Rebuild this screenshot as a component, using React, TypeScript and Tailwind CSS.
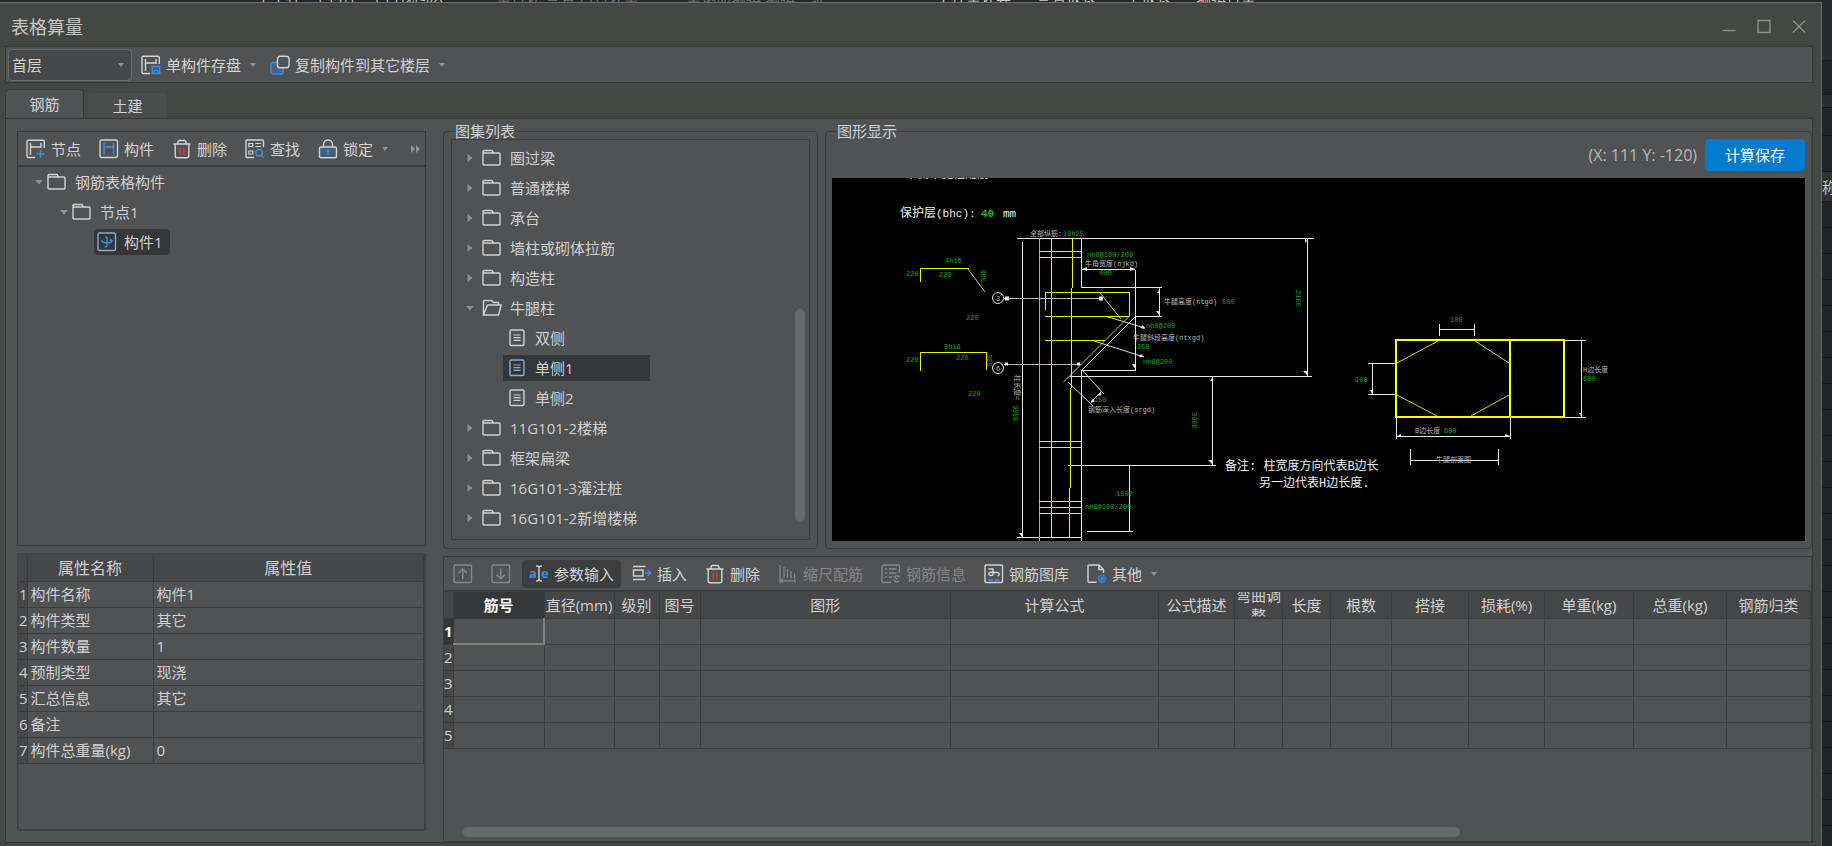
import type { ReactNode } from 'react';
import clsx from 'clsx';

const BLUE = '#3a8ee0';
const RED = '#c93a42';

// ---------- Icons ----------

function Svg({ children }: { children: ReactNode }) {
    return (
        <svg
            width="20"
            height="20"
            viewBox="0 0 20 20"
            fill="none"
            stroke="currentColor"
            strokeWidth="1.4"
            className="shrink-0"
            aria-hidden="true"
        >
            {children}
        </svg>
    );
}

const NodeIcon = () => (
    <Svg>
        <path d="M18.3 9V2.5a1.2 1.2 0 0 0-1.2-1.2H2.2A1.2 1.2 0 0 0 1 2.5v14.8a1.2 1.2 0 0 0 1.2 1.2H9" />
        <path d="M4.5 4v12M15 4v5M4.5 8H15" />
        <path d="M14.5 11v8M10.5 15h8" stroke={BLUE} />
    </Svg>
);

const SaveComponentIcon = () => (
    <Svg>
        <path d="M18.3 9V2.5a1.2 1.2 0 0 0-1.2-1.2H2.2A1.2 1.2 0 0 0 1 2.5v14.8a1.2 1.2 0 0 0 1.2 1.2H9" />
        <path d="M4.5 4v12M15 4v5M4.5 8H15" />
        <path d="M11.2 11.5h7.6v7h-7.6z" stroke={BLUE} fill="#2f5f93" />
        <path d="M13 18.5v-3h4v3" stroke={BLUE} strokeWidth="1" />
    </Svg>
);

const CopyIcon = () => (
    <Svg>
        <rect x="1" y="7.5" width="12" height="11.5" rx="1.5" stroke={BLUE} fill="#46638a" />
        <rect x="7.5" y="1.2" width="11.5" height="11.5" rx="2.5" fill="#515254" />
    </Svg>
);

const ComponentIcon = () => (
    <Svg>
        <rect x="1" y="1" width="17.5" height="17.5" rx="1.5" />
        <path d="M5 4v11.5M14.5 4v11.5M5 8h9.5" stroke={BLUE} />
    </Svg>
);

const TrashIcon = () => (
    <Svg>
        <path d="M1.5 5h17M6 4.5V3a1.5 1.5 0 0 1 1.5-1.5h5A1.5 1.5 0 0 1 14 3v1.5M3.2 5v12a1.8 1.8 0 0 0 1.8 1.8h10a1.8 1.8 0 0 0 1.8-1.8V5" />
        <path d="M8.2 8.5v7M11.8 8.5v7" stroke={RED} strokeWidth="1.6" />
    </Svg>
);

const FindIcon = () => (
    <Svg>
        <path d="M18.5 8V2.2A1.2 1.2 0 0 0 17.3 1H2.2A1.2 1.2 0 0 0 1 2.2v15.1a1.2 1.2 0 0 0 1.2 1.2H9" />
        <path d="M3.8 4.5h4v3h-4zM3.8 12h4v3h-4zM10.5 4.5H16M10.5 7.5H16" strokeWidth="1.2" />
        <circle cx="14" cy="13.8" r="3.3" stroke={BLUE} />
        <path d="m16.3 16.2 2.5 2.5" stroke={BLUE} />
    </Svg>
);

const LockIcon = () => (
    <Svg>
        <path d="M5.5 8V5.5a4.5 4.5 0 0 1 9 0V8" />
        <rect x="1.5" y="8" width="17" height="10.8" rx="1.5" fill="#45607f" />
        <path d="M10 16v-4.5" stroke={BLUE} strokeWidth="1.6" />
        <circle cx="10" cy="11.8" r="1.5" fill={BLUE} stroke="none" />
    </Svg>
);

const FolderIcon = () => (
    <Svg>
        <path d="M1 16V3.5a1 1 0 0 1 1-1h8L11.500 5h5.500a1 1 0 0 1 1 1v10a1 1 0 0 1-1 1H2a1 1 0 0 1-1-1zM1 5H12" />
    </Svg>
);

const FolderOpenIcon = () => (
    <Svg>
        <path d="M1.500 17V3.5a1 1 0 0 1 1-1h7l2 2h5V7M1.500 17 5.5 7h13.700l-2.700 10z" />
    </Svg>
);

const SheetIcon = () => (
    <Svg>
        <rect x="3" y="2" width="14" height="15.5" rx="1.5" />
        <path d="M6.5 7h7M6.5 9.7h7M6.5 12.4h7" strokeWidth="1.2" />
    </Svg>
);

const PieceIcon = () => (
    <Svg>
        <rect x="1" y="1" width="17.5" height="17.5" rx="1.5" stroke="#86aecf" />
        <path d="M10 5v8.2a1.600 1.600 0 0 1-2.400 1.400M8 5.200h2.500M5 8.200c0 2 1.200 2.500 3 2.500h4.500c1.800 0 2.500-.8 2.500-2.700M12.500 8.300l2.500-.5" stroke={BLUE} />
    </Svg>
);

const ArrowBoxIcon = ({ down }: { down?: boolean }) => (
    <Svg>
        <rect x="1" y="1" width="17.5" height="17.5" rx="1.2" />
        {down ? <path d="M9.8 4.500v10M5.500 10.500l4.300 4.300 4.300-4.300" /> : <path d="M9.8 15V5M5.500 9.300 9.800 5l4.300 4.300" />}
    </Svg>
);

const InputIcon = () => (
    <Svg>
        <path d="M10 3.5v12M7 2c1.5 0 3 .5 3 1.500C10 2.500 11.500 2 13 2M7 17c1.500 0 3-.5 3-1.500 0 1 1.500 1.500 3 1.500" />
        <text x="0" y="14" fontSize="13" fontWeight="700" fill={BLUE} stroke="none" fontFamily="Open Sans, sans-serif">a</text>
        <text x="12" y="14" fontSize="13" fontWeight="700" fill={BLUE} stroke="none" fontFamily="Open Sans, sans-serif">e</text>
    </Svg>
);

const InsertIcon = () => (
    <Svg>
        <path d="M1 2.500h12.500M1 15.500h12.500M1.500 6h9.500v6H1.500z" />
        <path d="M13 9h5.500M15.500 5.800 18.800 9l-3.300 3.200" stroke={BLUE} />
    </Svg>
);

const ScaleIcon = () => (
    <Svg>
        <path d="M2 1v18M6 3v11M9.500 5v9M13 7v7M16.500 9.500V14M2 16.800h15M4.500 15l-2 1.800 2 1.800M17 14.500v4.500" strokeWidth="1.2" />
    </Svg>
);

const InfoIcon = () => (
    <Svg>
        <path d="M18.500 9V2.200A1.200 1.200 0 0 0 17.300 1H2.200A1.200 1.200 0 0 0 1 2.200v15.100a1.200 1.200 0 0 0 1.200 1.200H10M4 5h2M8 5h7.500M4 9h2M8 9h7.500M4 13h2M8 13h3" />
        <path d="M13 15.500a3 3 0 0 0 5.500 1M18.500 13.500a3 3 0 0 0-5-.5l3 2.500" />
    </Svg>
);

const GalleryIcon = () => (
    <Svg>
        <rect x="1" y="1" width="17.5" height="17.5" rx="1.2" />
        <path d="M4.500 5H9v6.500M9 8.500c-2.200-.5-4.300 0-4.300 1.500S7.500 12 9 11M9 8.500h4.500a1.700 1.700 0 0 1 0 3.400" strokeWidth="1.4" />
        <path d="M4 16h5M10.500 16h5" stroke={BLUE} strokeWidth="1.6" />
    </Svg>
);

const OtherIcon = () => (
    <Svg>
        <path d="M9.500 18.300H2a1 1 0 0 1-1-1V2a1 1 0 0 1 1-1h10l4.500 4.500V9M12 1v4.500h4.500" />
        <circle cx="15" cy="15" r="3.600" fill="#2f6cab" stroke={BLUE} strokeDasharray="1.5 1" />
        <circle cx="15" cy="15" r="1.200" stroke={BLUE} strokeWidth="1" />
    </Svg>
);

const Caret = ({ right }: { right?: boolean }) => (
    <svg width="8" height="8" viewBox="0 0 8 8" className="shrink-0 text-[#8d8e90]" fill="currentColor" aria-hidden="true">
        {right ? <path d="M1.500 0l5 4-5 4z" /> : <path d="M0 2h8L4 6.500z" />}
    </svg>
);

const SmallCaret = () => (
    <svg width="6" height="4" viewBox="0 0 6 4" className="shrink-0 text-[#929395]" fill="currentColor" aria-hidden="true">
        <path d="M0 0h6L3 4z" />
    </svg>
);

// ---------- Shared pieces ----------

type ToolButtonProps = {
    icon: ReactNode;
    label?: string;
    title?: string;
    active?: boolean;
    disabled?: boolean;
    menu?: boolean;
};

function ToolButton({ icon, label, title, active, disabled, menu }: ToolButtonProps) {
    return (
        <button
            type="button"
            disabled={disabled}
            aria-label={label ?? title}
            className={clsx(
                'flex h-7 shrink-0 items-center gap-[5px] rounded px-[7px] whitespace-nowrap',
                active && 'bg-[#3c3d3f]',
                disabled ? 'text-[#858688]' : 'text-[#d2d2d2]',
            )}
        >
            {icon}
            {label && <span>{label}</span>}
            {menu && (
                <span className="pl-1">
                    <SmallCaret />
                </span>
            )}
        </button>
    );
}

type TreeRowProps = {
    label: string;
    icon: ReactNode;
    open?: boolean;
    compact?: boolean;
};

function TreeRow({ label, icon, open, compact }: TreeRowProps) {
    return (
        <div className="flex h-[30px] items-center">
            <Caret right={!open} />
            <span className={compact ? 'pl-1' : 'pl-2'}>{icon}</span>
            <span className="pl-2 whitespace-nowrap">{label}</span>
        </div>
    );
}

// ---------- Data ----------

const backgroundMenus = [
    { label: '个工程 · 个构件 · 个目视图层', className: 'text-[#c8c8c8] w-[240px]' },
    { label: '量合计 查看 自合计量', className: 'text-[#77787a] w-[190px]' },
    { label: '量钢筋编辑 编辑三维', className: 'text-[#77787a] w-[250px]' },
    { label: '工程量计算', className: 'text-[#c8c8c8] w-[100px]' },
    { label: '查看报表', className: 'text-[#c8c8c8] w-[90px]' },
    { label: '个报表', className: 'text-[#c8c8c8] w-[70px]' },
    { label: '编辑合量', className: 'text-[#c8c8c8]' },
];

const properties = [
    ['构件名称', '构件1'],
    ['构件类型', '其它'],
    ['构件数量', '1'],
    ['预制类型', '现浇'],
    ['汇总信息', '其它'],
    ['备注', ''],
    ['构件总重量(kg)', '0'],
];

const atlasBefore = ['圈过梁', '普通楼梯', '承台', '墙柱或砌体拉筋', '构造柱'];
const atlasOpen = ['双侧', '单侧1', '单侧2'];
const atlasAfter = ['11G101-2楼梯', '框架扁梁', '16G101-3灌注桩', '16G101-2新增楼梯'];

const barColumns = [
    { label: '筋号', col: 'w-[91px]' },
    { label: '直径(mm)', col: 'w-[70px]' },
    { label: '级别', col: 'w-[45px]' },
    { label: '图号', col: 'w-[41px]' },
    { label: '图形', col: '' },
    { label: '计算公式', col: 'w-[208px]' },
    { label: '公式描述', col: 'w-[76px]' },
    { label: '弯曲调整', col: 'w-[48px]' },
    { label: '长度', col: 'w-[48px]' },
    { label: '根数', col: 'w-[61px]' },
    { label: '搭接', col: 'w-[77px]' },
    { label: '损耗(%)', col: 'w-[76px]' },
    { label: '单重(kg)', col: 'w-[89px]' },
    { label: '总重(kg)', col: 'w-[93px]' },
    { label: '钢筋归类', col: 'w-[84px]' },
];

// ---------- Drawing ----------

const greenTexts: [number, number, string][] = [
    [945, 263, '4h16'],
    [906, 276, '220'],
    [939, 277, '220'],
    [966, 320, '220'],
    [944, 349, '3h16'],
    [906, 362, '220'],
    [956, 360, '220'],
    [968, 396, '220'],
    [1087, 257, 'nh8@100/200'],
    [1099, 275, '400'],
    [1222, 304, '500'],
    [1146, 328, 'nh8@200'],
    [1137, 349, '250'],
    [1143, 364, 'nh8@200'],
    [1094, 402, '150'],
    [1116, 496, '1500'],
    [1085, 509, 'nh8@100/200'],
    [1450, 322, '100'],
    [1355, 382, '100'],
    [1583, 381, '600'],
    [1444, 433, '600'],
];

const greyTexts: [number, number, string][] = [
    [1030, 236, '全部纵筋:'],
    [1085, 266, '牛角宽度(njkd)'],
    [1164, 304, '牛腿高度(ntgd)'],
    [1133, 340, '牛腿斜段高度(ntxgd)'],
    [1088, 412, '钢筋深入长度(srgd)'],
    [1583, 372, 'H边长度'],
    [1415, 433, 'B边长度'],
    [1436, 462, '牛腿剖面图'],
];

function CadDrawing() {
    return (
        <svg
            width="972"
            height="363"
            viewBox="832 178 972 363"
            fill="none"
            className="shrink-0"
            role="img"
            aria-label="牛腿柱 单侧1"
            fontFamily="Liberation Mono, Noto Sans CJK SC, monospace"
        >
            <g fill="#f0f0f0" fontSize="12">
                <text x="905" y="178">单侧牛腿柱配筋</text>
                <text x="900" y="217">保护层</text>
                <text x="936" y="217" fontSize="11">(bhc):</text>
                <text x="981" y="217" fontSize="11" fontWeight="700" fill="#00c800">40</text>
                <text x="1003" y="217" fontSize="11">mm</text>
                <text x="1225" y="470">备注: 柱宽度方向代表B边长</text>
                <text x="1259" y="487">另一边代表H边长度.</text>
            </g>

            {/* dimension lines */}
            <g stroke="#e8e8e8" strokeWidth="1" shapeRendering="crispEdges">
                <path d="M1017 238.500h297M1022.500 242v295M1017 537.500h64" />
                <path d="M1039.500 238v303" stroke="#a8a8a8" />
                <path d="M1081.500 238v49.500h80.500M1081.500 370v171" />
                <path d="M1081 269.500h54M1135.500 270v100M1159.500 287.500v29M1135 316.500h27M1081.500 370.500h54" />
                <path d="M1070 376.500h242M1307.500 238v138M1212.500 376v89M1068 465.500h148" />
                <path d="M1129.500 465v66M1087 531.500h46" />
                <path d="M1004 298.500h98M1004 364.500h77" stroke="#c0b4c0" />
                <path d="M1439 329.500h35M1439.500 324v12M1474.500 324v12" />
                <path d="M1372.500 363.500v31M1368 363.500h28M1368 394.500h28" />
                <path d="M1581.500 340v77M1564 340.500h22M1564 417.500h22" />
                <path d="M1396 436.500h114M1396.500 417v22M1510.500 417v22" />
                <path d="M1410 460.500h88M1410.500 449v16M1498.500 449v16" />
            </g>
            <g stroke="#dcdcdc" strokeWidth="1">
                <path d="m1135 317-53 53 22 24M1068 382l25 24M1101 392l-10 10" />
                <path d="m1105 316 40 12M1094 341l50 16" />
                <circle cx="998" cy="298" r="5.500" />
                <circle cx="998" cy="368" r="5.500" />
            </g>
            <g fill="#f0f0f0">
                <path d="M1005 296.500h4v4h-4zM1099 296.500h4v4h-4zM1005 362.500h3v3h-3zM1077 362.500h3v3h-3z" />
                <path d="m1082 269 5-2v4zM1135 269l-5-2v4zM1307 241l-2-3v5zM1307 375l-4-4h4zM1212 378l-2 3h2zM1212 464l-4-4h4z" />
                <path d="m1159 290-2 3h2zM1159 315l-3-4h3zM1145 329l-5-1 3-3zM1144 357l-5 0 2-3zM1135 369l-3-5h3zM1022 537l-3-4h3zM1372 394l-2-4h2zM1101 391l-3 5 3-1zM1091 403l4-2-3-2z" />
                <path d="m1397 436 4-2v3zM1510 436l-5-2v3zM1581 416l-2-3h2z" />
            </g>

            {/* reinforcement */}
            <g stroke="#f0f000" strokeWidth="1" shapeRendering="crispEdges">
                <path d="M1051.500 238v300M1072.500 238v50M1071.500 288v100M1070.500 388v100M1069.500 488v50" />
                <path d="M1039 251.500h42M1039 257.500h42M1039 441.500h42M1039 447.500h42M1039 501.500h42M1039 507.500h42M1039 513.500h42" />
                <path d="M1045.500 310v-17.500h84V316M1045 316.500h84M1045 340.500h60" />
                <path d="M920.500 282v-13.500h48M920.500 371v-18.500h66V370" />
            </g>
            <g stroke="#d8d800" strokeWidth="1">
                <path d="m1129.500 316-66 66M1100 293l21 26M968 269l17 23" />
                <path d="m1438 341-41 22M1475 341l34 22M1397 395l40 21M1509 395l-38 21" />
            </g>
            <g stroke="#ffff00" strokeWidth="2">
                <path d="M1396 340h168v77h-168zM1510 340v77" />
            </g>

            <g fill="#00b400" fontSize="7">
                <text x="1063" y="236">18h25</text>
                {greenTexts.map(([x, y, label]) => (
                    <text key={`${x}-${y}`} x={x} y={y}>{label}</text>
                ))}
                <text transform="translate(986 282) rotate(-90)">300</text>
                <text transform="translate(987 354) rotate(90)">300</text>
                <text transform="translate(1013 405) rotate(90)">9000</text>
                <text transform="translate(1192 412) rotate(90)">3900</text>
                <text transform="translate(1296 290) rotate(90)">2100</text>
            </g>
            <g fill="#b8b8b8" fontSize="7">
                {greyTexts.map(([x, y, label]) => (
                    <text key={label} x={x} y={y}>{label}</text>
                ))}
                <text transform="translate(1015 375) rotate(90)">柱长度=</text>
                <text x="996" y="301">3</text>
                <text x="996" y="371">6</text>
            </g>
        </svg>
    );
}

// ---------- Window sections ----------

function TitleBar() {
    return (
        <header className="flex h-[43px] shrink-0 items-center pt-1 pr-3 pl-[11px] text-[#c6c6c6]">
            <h1 className="flex-1 text-[18px]">表格算量</h1>
            <div className="flex items-center gap-[15px] text-[#8e8f8f]">
                <button type="button" aria-label="最小化">
                    <Svg><path d="M3.500 13.500h13" /></Svg>
                </button>
                <button type="button" aria-label="最大化">
                    <Svg><path d="M4 3.500h12v12H4z" /></Svg>
                </button>
                <button type="button" aria-label="关闭">
                    <Svg><path d="m4 3.500 12 12M16 3.500l-12 12" /></Svg>
                </button>
            </div>
        </header>
    );
}

function MainToolbar() {
    return (
        <div className="flex h-[37px] shrink-0 items-center border border-[#373838] bg-[#515254] pl-0.5">
            <label className="relative flex w-[124px] items-center">
                <span className="sr-only">楼层</span>
                <select className="h-8 w-full appearance-none rounded border border-[#696a6c] bg-[#464749] pl-[3px] text-[#d2d2d2] outline-none">
                    <option>首层</option>
                </select>
                <span className="pointer-events-none absolute right-2">
                    <SmallCaret />
                </span>
            </label>
            <div className="flex items-center pl-0.5">
                <ToolButton icon={<SaveComponentIcon />} label="单构件存盘" menu />
                <ToolButton icon={<CopyIcon />} label="复制构件到其它楼层" menu />
            </div>
        </div>
    );
}

function ComponentPanel() {
    return (
        <section className="flex min-h-0 flex-1 flex-col border border-[#3b3c3d]">
            <div className="flex h-[35px] shrink-0 items-center gap-1 border-b-2 border-[#3b3c3d] pr-1 pl-px">
                <ToolButton icon={<NodeIcon />} label="节点" />
                <ToolButton icon={<ComponentIcon />} label="构件" />
                <ToolButton icon={<TrashIcon />} label="删除" />
                <ToolButton icon={<FindIcon />} label="查找" />
                <ToolButton icon={<LockIcon />} label="锁定" menu />
                <button type="button" aria-label="更多" className="ml-auto">
                    <svg width="10" height="8" viewBox="0 0 10 8" fill="#929395" aria-hidden="true">
                        <path d="M0 0l4 4-4 4zM5 0l4 4-4 4z" />
                    </svg>
                </button>
            </div>
            <div>
                <div className="pl-[17px]">
                    <TreeRow label="钢筋表格构件" icon={<FolderIcon />} open compact />
                </div>
                <div className="pl-[42px]">
                    <TreeRow label="节点1" icon={<FolderIcon />} open compact />
                </div>
                <div className="flex h-[30px] items-center pl-[76px]">
                    <div className="flex h-[26px] items-center gap-[7px] rounded bg-[#353638] pr-[7px] pl-[3px]">
                        <PieceIcon />
                        <span>构件1</span>
                    </div>
                </div>
            </div>
        </section>
    );
}

function PropertyPanel() {
    return (
        <section className="h-[278px] shrink-0 border-2 border-[#424345]">
            <table className="w-full table-fixed border-collapse leading-5">
                <colgroup>
                    <col className="w-2" />
                    <col className="w-[126px]" />
                    <col />
                </colgroup>
                <thead>
                    <tr className="h-[26px] bg-[#464749] text-[16px]">
                        <td className="border-r border-b border-[#3b3c3d]" />
                        <th className="border-r border-b border-[#3b3c3d] font-normal">属性名称</th>
                        <th className="border-r border-b border-[#3b3c3d] font-normal">属性值</th>
                    </tr>
                </thead>
                <tbody>
                    {properties.map(([name, value], i) => (
                        <tr key={name} className="h-[26px]">
                            <td className="border-r border-b border-[#3b3c3d] bg-[#464749] whitespace-nowrap">{i + 1}</td>
                            <td className="border-r border-b border-[#3b3c3d] pl-[3px] whitespace-nowrap">{name}</td>
                            <td className="border-r border-b border-[#3b3c3d] pl-[3px]">{value}</td>
                        </tr>
                    ))}
                </tbody>
            </table>
        </section>
    );
}

function AtlasPanel() {
    return (
        <fieldset className="flex w-[375px] shrink-0 flex-col rounded border border-[#3d3e40] px-[7px] pb-2">
            <legend className="ml-1 leading-4">图集列表</legend>
            <div className="flex min-h-0 flex-1 overflow-hidden border border-[#3d3e40] pt-[3px]">
                <div className="flex-1 pl-[14px]">
                    {atlasBefore.map((name) => (
                        <TreeRow key={name} label={name} icon={<FolderIcon />} />
                    ))}
                    <TreeRow label="牛腿柱" icon={<FolderOpenIcon />} open />
                    {atlasOpen.map((name) => (
                        <div key={name} className="flex h-[30px] items-center pl-[37px]">
                            <div className={clsx('flex h-[26px] w-[147px] items-center gap-2 pl-1', name === '单侧1' && 'bg-[#353638]')}>
                                <span className={clsx('flex', name === '单侧1' && 'text-[#86aecf]')}>
                                    <SheetIcon />
                                </span>
                                <span>{name}</span>
                            </div>
                        </div>
                    ))}
                    {atlasAfter.map((name) => (
                        <TreeRow key={name} label={name} icon={<FolderIcon />} />
                    ))}
                </div>
                <div className="flex flex-col justify-end pr-1 pb-[17px]">
                    <div className="h-[213px] w-2.5 rounded-full bg-[#67686a]" />
                </div>
            </div>
        </fieldset>
    );
}

function GraphicPanel() {
    return (
        <fieldset className="flex min-w-0 flex-1 flex-col rounded border border-[#3d3e40] px-[6px] pb-[7px]">
            <legend className="ml-[5px] leading-4">图形显示</legend>
            <div className="flex h-8 shrink-0 items-center justify-end gap-2">
                <span className="text-[16px] text-[#b9b9b9]">(X: 111 Y: -120)</span>
                <button type="button" className="h-full w-[100px] rounded bg-[#037bcd] text-white">
                    计算保存
                </button>
            </div>
            <div className="mt-[7px] flex min-h-0 flex-1 overflow-hidden bg-black">
                <CadDrawing />
            </div>
        </fieldset>
    );
}

function BarTablePanel() {
    return (
        <section className="flex min-h-0 flex-1 flex-col border border-[#3b3c3d]">
            <div className="flex h-[35px] shrink-0 items-center gap-1 border-b-2 border-[#3b3c3d] pl-0.5">
                <ToolButton icon={<ArrowBoxIcon />} title="上移" disabled />
                <ToolButton icon={<ArrowBoxIcon down />} title="下移" disabled />
                <ToolButton icon={<InputIcon />} label="参数输入" active />
                <ToolButton icon={<InsertIcon />} label="插入" />
                <ToolButton icon={<TrashIcon />} label="删除" />
                <ToolButton icon={<ScaleIcon />} label="缩尺配筋" disabled />
                <ToolButton icon={<InfoIcon />} label="钢筋信息" disabled />
                <ToolButton icon={<GalleryIcon />} label="钢筋图库" />
                <ToolButton icon={<OtherIcon />} label="其他" menu />
            </div>
            <div className="min-h-0 flex-1 overflow-hidden">
                <table className="w-full table-fixed border-collapse leading-5">
                    <colgroup>
                        <col className="w-[9px]" />
                        {barColumns.map((c) => (
                            <col key={c.label} className={c.col} />
                        ))}
                    </colgroup>
                    <thead>
                        <tr className="h-[26px] bg-[#464749]">
                            <td className="border-r border-b border-[#3b3c3d]" />
                            {barColumns.map((c, i) => (
                                <th
                                    key={c.label}
                                    className={clsx(
                                        'border-r border-b border-[#3b3c3d] p-0',
                                        i === 0 ? 'bg-[#353638] font-bold text-white' : 'font-normal',
                                    )}
                                >
                                    <div className="flex h-[25px] items-center justify-center overflow-hidden">
                                        <span className={c.label === '弯曲调整' ? '' : 'whitespace-nowrap'}>{c.label}</span>
                                    </div>
                                </th>
                            ))}
                        </tr>
                    </thead>
                    <tbody>
                        {[1, 2, 3, 4, 5].map((n) => (
                            <tr key={n} className="h-[26px]">
                                <td
                                    className={clsx(
                                        'border-r border-b border-[#3b3c3d] whitespace-nowrap',
                                        n === 1 ? 'bg-[#353638] font-bold text-white' : 'bg-[#464749]',
                                    )}
                                >
                                    {n}
                                </td>
                                {barColumns.map((c, i) => (
                                    <td
                                        key={c.label}
                                        className={clsx(
                                            n === 1 && i === 0
                                                ? 'border-r-2 border-b-2 border-[#80817c]'
                                                : 'border-r border-b border-[#3f4042]',
                                        )}
                                    />
                                ))}
                            </tr>
                        ))}
                    </tbody>
                </table>
            </div>
            <div className="flex h-[14px] shrink-0 items-start pl-[18px]">
                <div className="h-2.5 w-[74%] rounded-full bg-[#67686a]" />
            </div>
        </section>
    );
}

function BackgroundStrip() {
    return (
        <div className="flex w-2.5 shrink-0 flex-col overflow-hidden bg-[#222324]" aria-hidden="true">
            <div className="h-[59px] shrink-0 border-b border-[#161717] bg-[#28292a]" />
            <div className="h-[34px] shrink-0 border-b border-[#161717]" />
            <div className="h-[13px] shrink-0 border-b border-[#161717] bg-[#2b2c2d]" />
            <div className="h-7 shrink-0 border-b border-[#161717]" />
            <div className="h-9 shrink-0 border-b border-[#161717]" />
            <div className="flex h-[30px] shrink-0 items-center border-b border-[#161717] bg-[#303132] whitespace-nowrap text-[#c6c6c6]">
                称
            </div>
            {Array.from({ length: 26 }, (_, i) => (
                <div key={i} className="h-[26px] shrink-0 border-b border-[#161717]" />
            ))}
        </div>
    );
}

export default function App() {
    return (
        <div className="flex h-screen flex-col overflow-hidden bg-[#262728] font-['Open_Sans','Noto_Sans_CJK_SC',sans-serif] text-[15px] leading-5 text-[#d0d0d0]">
            <div className="flex h-0.5 shrink-0 items-end overflow-hidden pl-64 whitespace-nowrap" aria-hidden="true">
                {backgroundMenus.map((menu) => (
                    <span key={menu.label} className={clsx('h-4 shrink-0 leading-5', menu.className)}>
                        {menu.label}
                    </span>
                ))}
            </div>

            <div className="flex min-h-0 flex-1">
                <main className="flex min-w-0 flex-1 flex-col border-t border-r border-[#6a6b6b] bg-[#454745] pb-[3px]">
                    <TitleBar />
                    <div className="flex min-h-0 flex-1 flex-col pr-2 pl-[5px]">
                        <MainToolbar />

                        <div className="flex h-[35px] shrink-0 items-end gap-1" role="tablist">
                            <button
                                type="button"
                                role="tab"
                                aria-selected="true"
                                className="h-[29px] w-[79px] rounded-t border border-b-0 border-[#373838] bg-[#515254]"
                            >
                                钢筋
                            </button>
                            <button type="button" role="tab" aria-selected="false" className="h-[25px] w-[79px] rounded-t bg-[#4b4d4d]">
                                土建
                            </button>
                        </div>

                        <div className="flex min-h-0 flex-1 gap-[17px] border border-[#373838] bg-[#515254] pl-[11px]">
                            <div className="flex w-[409px] shrink-0 flex-col gap-[7px] pt-3 pb-[11px]">
                                <ComponentPanel />
                                <PropertyPanel />
                            </div>
                            <div className="flex min-w-0 flex-1 flex-col gap-[7px] pt-1">
                                <div className="flex h-[426px] shrink-0 gap-[7px]">
                                    <AtlasPanel />
                                    <GraphicPanel />
                                </div>
                                <BarTablePanel />
                            </div>
                        </div>
                    </div>
                </main>
                <BackgroundStrip />
            </div>
        </div>
    );
}
